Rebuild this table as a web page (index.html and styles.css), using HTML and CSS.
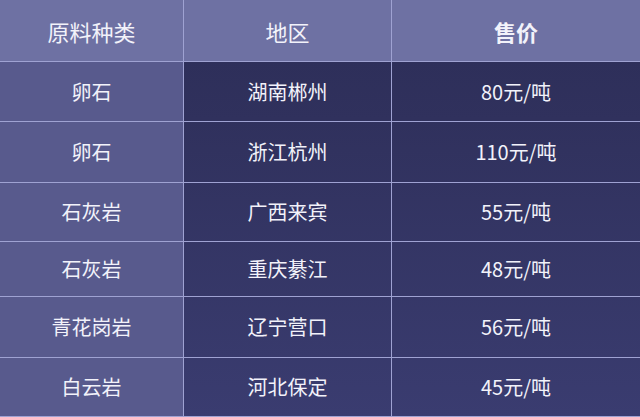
FILE: index.html
```html
<!DOCTYPE html>
<html lang="zh-CN">
<head>
<meta charset="utf-8">
<title>原料价格</title>
<link rel="stylesheet" href="styles.css">
</head>
<body>
<div class="table">
  <div class="cell head">原料种类</div>
  <div class="cell head">地区</div>
  <div class="cell head bold">售价</div>

  <div class="cell kind">卵石</div>
  <div class="cell body">湖南郴州</div>
  <div class="cell body">80元/吨</div>

  <div class="cell kind">卵石</div>
  <div class="cell body">浙江杭州</div>
  <div class="cell body">110元/吨</div>

  <div class="cell kind">石灰岩</div>
  <div class="cell body">广西来宾</div>
  <div class="cell body">55元/吨</div>

  <div class="cell kind">石灰岩</div>
  <div class="cell body">重庆綦江</div>
  <div class="cell body">48元/吨</div>

  <div class="cell kind">青花岗岩</div>
  <div class="cell body">辽宁营口</div>
  <div class="cell body">56元/吨</div>

  <div class="cell kind">白云岩</div>
  <div class="cell body">河北保定</div>
  <div class="cell body">45元/吨</div>
</div>
</body>
</html>
```

FILE: styles.css
```css
html, body {
  margin: 0;
  padding: 0;
  background: #9fa2d2;
}

body {
  width: 640px;
  height: 417px;
  overflow: hidden;
  font-family: "Noto Sans CJK SC", "Noto Sans", sans-serif;
  color: #f2f2fa;
}

.table {
  display: grid;
  grid-template-columns: 183px 207px 248px;
  grid-template-rows: 61px 59px 60px 58px 54px 60px 58px;
  column-gap: 1px;
  row-gap: 1px;
  background: #9fa2d2;
  height: 417px;
}

.cell {
  display: flex;
  align-items: center;
  justify-content: center;
  font-size: 20px;
  line-height: 1;
}

.head {
  background: #6e71a3;
  font-size: 22px;
}

.bold {
  font-weight: 700;
}

.kind {
  background: #585a8d;
}

.body {
  background: linear-gradient(to bottom, #2c2d57 0px, #30315d 120px, #3a3c70 417px) fixed;
}
```
